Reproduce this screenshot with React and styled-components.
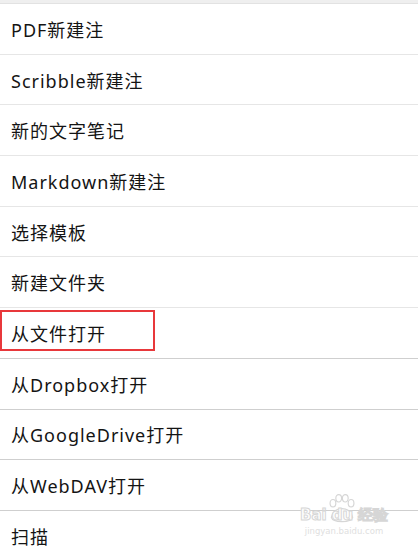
import React from "react";
import styled, { createGlobalStyle } from "styled-components";

const GlobalStyle = createGlobalStyle`
  html, body {
    margin: 0;
    padding: 0;
    background: #ffffff;
  }
  body {
    font-family: "Noto Sans", "Noto Sans CJK SC", sans-serif;
    -webkit-font-smoothing: antialiased;
  }
`;

const Page = styled.div`
  position: relative;
  width: 418px;
  height: 549px;
  overflow: hidden;
  background: #ffffff;
`;

const TopStrip = styled.div`
  height: 3px;
  background: #efefef;
  border-bottom: 1px solid #e2e2e2;
`;

const Menu = styled.ul`
  list-style: none;
  margin: 0;
  padding: 0;
`;

const Row = styled.li`
  position: relative;
  display: flex;
  align-items: center;
  height: 49.7px;
  padding-left: 11px;
  border-bottom: 1px solid ${(p) => (p.$dark ? "#cfcfcf" : "#e6e6e6")};
  font-size: 18px;
  color: #141414;
  letter-spacing: 1px;
  white-space: nowrap;
`;

const Highlight = styled.span`
  position: absolute;
  left: 0;
  top: 2px;
  width: 155px;
  height: 41px;
  box-sizing: border-box;
  border: 2px solid #e8383b;
  pointer-events: none;
`;

const Watermark = styled.div`
  position: absolute;
  left: 300px;
  top: 507px;
  width: 88px;
  display: flex;
  flex-direction: column;
  font-family: "DejaVu Sans", sans-serif;
  pointer-events: none;
`;

const MarkLine = styled.div`
  position: relative;
  display: flex;
  justify-content: space-between;
  align-items: center;
  font-size: 15px;
  line-height: 17px;
  font-weight: bold;
  -webkit-text-stroke: 1px #d6d6d6;
  color: #ffffff;
`;

const MarkSub = styled.div`
  font-size: 8.5px;
  line-height: 10px;
  margin-top: 2px;
  color: #e0e0e0;
  text-align: center;
  white-space: nowrap;
`;

const Paw = styled.svg`
  position: absolute;
  left: 28px;
  top: -13px;
`;

const MarkWord = styled.span`
  position: relative;
`;

const items = [
  "PDF新建注",
  "Scribble新建注",
  "新的文字笔记",
  "Markdown新建注",
  "选择模板",
  "新建文件夹",
  "从文件打开",
  "从Dropbox打开",
  "从GoogleDrive打开",
  "从WebDAV打开",
  "扫描",
];

export default function App() {
  return (
    <>
      <GlobalStyle />
      <Page>
        <TopStrip />
        <Menu>
          {items.map((label, i) => (
            <Row key={label} $dark={i >= 6}>
              {label}
              {i === 6 && <Highlight />}
            </Row>
          ))}
        </Menu>
        <Watermark>
          <MarkLine>
            <Paw width="28" height="30" viewBox="0 0 34 36">
              <g fill="#ffffff" stroke="#d6d6d6" strokeWidth="1.4">
                <ellipse cx="6" cy="11" rx="3.5" ry="4.5" />
                <ellipse cx="13" cy="5" rx="3.5" ry="4.5" />
                <ellipse cx="21" cy="5" rx="3.5" ry="4.5" />
                <ellipse cx="28" cy="11" rx="3.5" ry="4.5" />
                <path d="M4 28 C6 14 28 14 30 28 C28 35 6 35 4 28 Z" />
              </g>
            </Paw>
            <MarkWord>Bai</MarkWord>
            <MarkWord>du</MarkWord>
            <MarkWord>经验</MarkWord>
          </MarkLine>
          <MarkSub>jingyan.baidu.com</MarkSub>
        </Watermark>
      </Page>
    </>
  );
}
